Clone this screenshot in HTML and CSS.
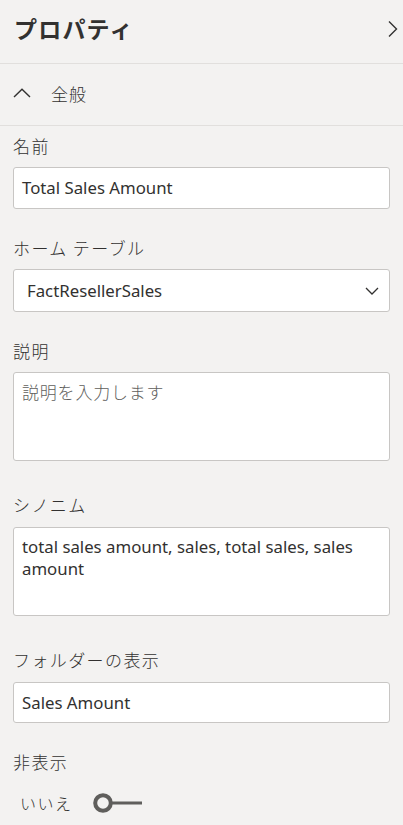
FILE: index.html
```html
<!DOCTYPE html>
<html lang="ja">
<head>
<meta charset="utf-8">
<link rel="stylesheet" href="styles.css">
</head>
<body>
<div class="pane">
  <header class="pane-header">
    <h1 class="pane-title">プロパティ</h1>
    <svg class="icon-collapse" width="12" height="18" viewBox="0 0 12 18"><path d="M2 1.5 L9.5 9 L2 16.5" fill="none" stroke="#323130" stroke-width="1.4"/></svg>
  </header>
  <div class="section-header">
    <svg class="icon-up" width="18" height="10" viewBox="0 0 18 10"><path d="M1 9 L9 1.2 L17 9" fill="none" stroke="#323130" stroke-width="1.4"/></svg>
    <span class="section-title">全般</span>
  </div>
  <div class="fields">
    <div class="field">
      <div class="label">名前</div>
      <div class="box box-input">Total Sales Amount</div>
    </div>
    <div class="field">
      <div class="label">ホーム テーブル</div>
      <div class="box box-select">
        <span>FactResellerSales</span>
        <svg width="14" height="8" viewBox="0 0 14 8"><path d="M1 1 L7 7 L13 1" fill="none" stroke="#323130" stroke-width="1.3"/></svg>
      </div>
    </div>
    <div class="field field-multi">
      <div class="label">説明</div>
      <div class="box box-area placeholder">説明を入力します</div>
    </div>
    <div class="field field-multi">
      <div class="label">シノニム</div>
      <div class="box box-area">total sales amount, sales, total sales, sales amount</div>
    </div>
    <div class="field">
      <div class="label">フォルダーの表示</div>
      <div class="box box-input box-short">Sales Amount</div>
    </div>
    <div class="field field-last">
      <div class="label">非表示</div>
      <div class="toggle-row">
        <span class="toggle-text">いいえ</span>
        <svg class="toggle" width="52" height="22" viewBox="0 0 52 22"><circle cx="10" cy="11" r="7.8" fill="none" stroke="#5f5e5c" stroke-width="4"/><rect x="18" y="9.5" width="31" height="3" fill="#5f5e5c"/></svg>
      </div>
    </div>
  </div>
</div>
</body>
</html>
```
FILE: styles.css
```css
html, body {
  margin: 0;
  padding: 0;
  background: #f3f2f1;
}
body {
  font-family: "Noto Sans", "Noto Sans CJK JP", sans-serif;
  color: #323130;
  width: 403px;
  height: 825px;
  overflow: hidden;
}
.pane-header {
  height: 64px;
  border-bottom: 1px solid #e1dfdd;
  display: flex;
  align-items: center;
  justify-content: space-between;
  padding: 0 4px 0 14px;
  box-sizing: border-box;
}
.pane-title {
  margin: 0;
  font-family: "Noto Sans CJK JP", sans-serif;
  font-size: 23px;
  font-weight: 700;
  letter-spacing: 1.2px;
  line-height: 30px;
  margin-top: -8px;
}
.icon-collapse {
  margin-top: -6px;
}
.section-header {
  height: 61px;
  border-bottom: 1px solid #e1dfdd;
  display: flex;
  align-items: center;
  padding-left: 13px;
}
.icon-up {
  margin-top: -4px;
}
.section-title {
  margin-left: 20px;
  font-family: "Noto Sans CJK JP", sans-serif;
  font-size: 17px;
  font-weight: 300;
  letter-spacing: 1px;
  line-height: 24px;
  margin-top: -2px;
}
.fields {
  padding: 8px 13px 0 13px;
}
.field {
  margin-bottom: 27px;
}
.field-multi {
  margin-bottom: 32px;
}
.label {
  font-family: "Noto Sans CJK JP", sans-serif;
  font-size: 17px;
  font-weight: 300;
  letter-spacing: 1.4px;
  line-height: 24px;
  margin-bottom: 9px;
}
.field-multi + .field-multi .label,
.field-multi + .field .label {
  margin-bottom: 10px;
}
.box {
  background: #ffffff;
  border: 1px solid #c8c6c4;
  border-radius: 3px;
  box-sizing: border-box;
  font-size: 16.8px;
  color: #323130;
}
.box-input {
  height: 42px;
  line-height: 40px;
  padding: 0 8px;
}
.box-short {
  height: 41px;
  line-height: 39px;
}
.box-select {
  height: 43px;
  display: flex;
  align-items: center;
  justify-content: space-between;
  padding: 0 10px 0 13px;
}
.box-area {
  height: 89px;
  padding: 8px 8px;
  line-height: 22px;
}
.placeholder {
  color: #605e5c;
  font-family: "Noto Sans CJK JP", sans-serif;
  font-weight: 300;
  font-size: 17px;
  letter-spacing: 0.8px;
}
.toggle-row {
  display: flex;
  align-items: center;
  margin-top: 18px;
  padding-left: 7px;
}
.toggle-text {
  font-family: "Noto Sans CJK JP", sans-serif;
  font-size: 16px;
  font-weight: 300;
  letter-spacing: 1.5px;
  line-height: 22px;
  color: #323130;
}
.toggle {
  margin-left: 20px;
}
```
